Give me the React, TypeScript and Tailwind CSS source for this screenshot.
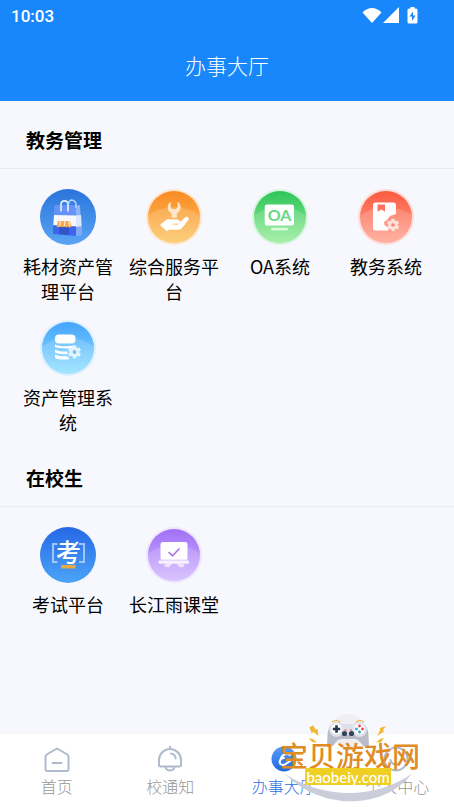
import React from "react";

const FONT = "font-['Noto_Sans_CJK_SC','Noto_Sans',sans-serif]";

type DiscProps = { id: string; top: string; bottom: string; rim: string; arc?: boolean; children: React.ReactNode };

function Disc({ id, top, bottom, rim, arc, children }: DiscProps) {
  return (
    <svg viewBox="0 0 56 56" className="size-14" aria-hidden="true">
      <defs>
        <linearGradient id={id} x1="0" y1="0" x2="0" y2="1">
          <stop offset="0" stopColor={top} />
          <stop offset="1" stopColor={bottom} />
        </linearGradient>
        <clipPath id={id + "-clip"}>
          <circle cx="28" cy="28" r="26" />
        </clipPath>
      </defs>
      <circle cx="28" cy="28" r="28" fill={arc ? rim : `url(#${id})`} />
      {arc && (
        <>
          <circle cx="28" cy="28" r="26" fill={`url(#${id})`} />
          <ellipse cx="28" cy="50" rx="38" ry="32" fill="#fff" opacity="0.16" clipPath={`url(#${id}-clip)`} />
        </>
      )}
      {children}
    </svg>
  );
}

function Gear({ x, y, s, fill, hole }: { x: number; y: number; s: number; fill: string; hole: string }) {
  return (
    <g transform={`translate(${x} ${y}) scale(${s})`}>
      {[0, 60, 120].map((a) => (
        <rect key={a} x="-1.8" y="-6.6" width="3.6" height="13.2" rx="1" fill={fill} transform={`rotate(${a})`} />
      ))}
      <circle r="5" fill={fill} />
      <circle r="1.9" fill={hole} />
    </g>
  );
}

const BagIcon = () => (
  <Disc id="bag" top="#2a74dc" bottom="#5aa5f5" rim="">
    <path d="M35 17l5-1 1.500 30-6.500 1z" fill="#8db4f8" />
    <path d="M14.500 16h21.500v30.500l-23-1.500z" fill="#6593fb" />
    <path d="M14 26l22 .5v11L13.300 36z" fill="#f6f8fe" />
    <path d="M36 26.500l5-.5.700 11.500-5.700.5z" fill="#dbe7fd" />
    <path d="M13.200 36.500l22.800 1v9.500l-23-2z" fill="#3b66ee" />
    <path d="M36 38l6-.5v8.500l-6 1z" fill="#82a9f7" />
    <path d="M19 38h10v8l-10-1z" fill="#3154c9" />
    <path d="M21 22.500v-6.500c0-5.500 7-5.500 7 0v6.500" fill="none" stroke="#e3eeff" strokeWidth="1.700" />
    <path d="M28.500 15c0-5.500 7.500-5 7.500 1v3" fill="none" stroke="#b4d2fb" strokeWidth="1.600" />
    <path d="M18 32h12l1.500 5.500c-1 1.500-3 1-3.700 0-1 1.300-2.700 1-3.500 0-1 1-2.600 1-3.300 0-1.300 1-3.300 1-4.500 0z" fill="#f6a651" />
    <path d="M20.500 32l-1 5M25 32l-.500 5M29 32l.500 5" stroke="#ffe6bd" strokeWidth="1.300" />
  </Disc>
);

const ServiceIcon = () => (
  <Disc id="service" top="#fb8a24" bottom="#fcc660" rim="#fde6cb" arc>
    <path
      d="M24.700 12.700c-4.200 2.300-4 9.200.9 11.500v4.500h5.200v-4.500c4.800-2.300 5-9.200.8-11.500v5.800l-1.800 1.600h-3.300l-1.800-1.600z"
      fill="#ffe6c9"
    />
    <path
      d="M14.500 36l5.500-4.600c1.500-1 3-1 5-.4h6.500c2.400.2 2.400 3 .2 3.300h1.500l6-5.500c1.800-1.500 4 .2 2.800 2l-6 7.800c-1 1.200-2 1.600-4 1.600h-9l-2.200 1.600z"
      fill="#fff"
      stroke="#fff"
      strokeWidth="1"
      strokeLinejoin="round"
    />
    <path d="M27 35.200h5" stroke="#fbb45a" strokeWidth=".8" strokeLinecap="round" />
  </Disc>
);

const OaIcon = () => (
  <Disc id="oa" top="#2ec65c" bottom="#97ec98" rim="#d6f5dc" arc>
    <rect x="12.700" y="15.500" width="29.300" height="21" rx="2.500" fill="#fff" />
    <text x="27.500" y="32" textAnchor="middle" fill="#67d783" className="font-[Lato,sans-serif] text-[16px] font-bold">
      OA
    </text>
    <rect x="19" y="38.800" width="17" height="2.600" rx="1.300" fill="#d9f9db" />
  </Disc>
);

const BookIcon = () => (
  <Disc id="book" top="#fb5b40" bottom="#ffa392" rim="#ffdcd6" arc>
    <path
      d="M17.500 13.500h18a2.500 2.500 0 0 1 2.500 2.500v9l-6 2-3 4-3 2 .5 3 3 2.500 1 3H17.500a2.500 2.500 0 0 1-2.500-2.500V16a2.500 2.500 0 0 1 2.500-2.500z"
      fill="#fff"
    />
    <path d="M19.500 15.500h7.500v7.200l-3.700-2.200-3.800 2.200z" fill="#fb7462" />
    <Gear x={35} y={36} s={0.95} fill="#ffe1dc" hole="#fb8271" />
  </Disc>
);

const DatabaseIcon = () => (
  <Disc id="database" top="#45a4fc" bottom="#93e1ff" rim="#dcf0ff" arc>
    <rect x="15" y="14.500" width="20.500" height="9" rx="4" fill="#fff" />
    <path
      d="M15 24.500c4 2 9 2.300 20.500 1v2c-6 1.500-16 1.200-20.500-.5zM15 29.500c4 2 8 2.300 12.500 2v2.500c-5 .5-9 0-12.500-1.500zM15 34.500c4 1.800 8 2 12.500 1.800l2 3c-6 .6-14.500.2-14.500-2z"
      fill="#fff"
    />
    <Gear x={34.500} y={32} s={1} fill="#e2f5ff" hole="#6fc1fd" />
  </Disc>
);

const ExamIcon = () => (
  <Disc id="exam" top="#2668e6" bottom="#4ba5f7" rim="">
    <path d="M17.500 17h-4.500v18h4.500M39 17h5v18h-5" fill="none" stroke="#9dc6fb" strokeWidth="2" />
    <text
      x="28.500"
      y="34.500"
      textAnchor="middle"
      fill="#fff"
      className="font-['Noto_Sans_CJK_SC',sans-serif] text-[25px] font-medium"
    >
      考
    </text>
    <rect x="21" y="38" width="14.500" height="3.500" fill="#e4aa45" />
  </Disc>
);

const ClassIcon = () => (
  <Disc id="class" top="#a070f6" bottom="#d2b8ff" rim="#eee5fe" arc>
    <rect x="14.500" y="15" width="27" height="18.500" rx="2.500" fill="#fff" />
    <path d="M22.500 25l4 3.800 7-7.300" fill="none" stroke="#a777e4" strokeWidth="1.700" />
    <path d="M13 33.200h30" stroke="#cfadfa" strokeWidth=".8" />
    <rect x="12.500" y="33.500" width="30.500" height="3.300" rx="1.200" fill="#f8efff" />
    <path d="M19.500 36.500h7l-4 4-4.500-1.200zM30 36.500h7l1.500 2.800-4.500 1.200z" fill="#f1e4ff" />
  </Disc>
);

const sections = [
  {
    title: "教务管理",
    apps: [
      { name: "耗材资产管理平台", Icon: BagIcon },
      { name: "综合服务平台", Icon: ServiceIcon },
      { name: "OA系统", Icon: OaIcon },
      { name: "教务系统", Icon: BookIcon },
      { name: "资产管理系统", Icon: DatabaseIcon },
    ],
  },
  {
    title: "在校生",
    apps: [
      { name: "考试平台", Icon: ExamIcon },
      { name: "长江雨课堂", Icon: ClassIcon },
    ],
  },
];

const navStroke = { fill: "none", stroke: "#b0bacd", strokeWidth: 2, strokeLinecap: "round", strokeLinejoin: "round" } as const;

const HomeIcon = () => (
  <svg viewBox="0 0 28 28" className="size-7" aria-hidden="true" {...navStroke}>
    <path d="M2.500 10.500c0-1 .4-1.500 1.200-2L14 2.500l10.300 6c.8.500 1.200 1 1.200 2v13a1.500 1.500 0 0 1-1.500 1.500h-20a1.500 1.500 0 0 1-1.500-1.500zM9.500 17h9" />
  </svg>
);
const BellIcon = () => (
  <svg viewBox="0 0 28 28" className="size-7" aria-hidden="true" {...navStroke}>
    <path d="M14 .7v2M4.500 20.500a1.500 1.500 0 0 1-1.500-1.500V14a11 11 0 0 1 22 0v5a1.500 1.500 0 0 1-1.500 1.500zM9.500 21c.5 4.500 8.500 4.500 9 0M15 7.500c3 .5 4.500 2.500 4.700 5" />
  </svg>
);
const HallIcon = () => (
  <svg viewBox="0 0 28 28" className="size-7" aria-hidden="true">
    <defs>
      <linearGradient id="hall" x1="0" y1="0" x2="0" y2="1">
        <stop offset="0" stopColor="#5b9cf8" />
        <stop offset="1" stopColor="#1f69e8" />
      </linearGradient>
    </defs>
    <circle cx="14" cy="13" r="12.500" fill="url(#hall)" />
    <path d="M11 12c2-4 6-5 9-3M14 12c-5 0-6 7-1 7 4 0 5-4 9-5" fill="none" stroke="#fff" strokeWidth="2" strokeLinecap="round" />
  </svg>
);
const UserIcon = () => (
  <svg viewBox="0 0 28 28" className="size-7" aria-hidden="true" {...navStroke}>
    <circle cx="13" cy="13" r="11.500" />
    <path d="M7.500 14c1.500 6 9.500 6 11 0" />
  </svg>
);

const tabs = [
  { name: "首页", Icon: HomeIcon },
  { name: "校通知", Icon: BellIcon },
  { name: "办事大厅", Icon: HallIcon, active: true },
  { name: "个人中心", Icon: UserIcon },
];

function Watermark() {
  return (
    <div className="pointer-events-none absolute right-[34px] bottom-0 h-[95px] w-[140px]">
      <svg viewBox="0 0 140 95" className="absolute inset-0 size-full" aria-hidden="true">
        <circle cx="68" cy="19" r="17" fill="#efeff1" />
        <path d="M5 62c38 25 90 26 127-.5C104 98 42 99 5 62z" fill="#cbcddb" />
        <path
          d="M51 13q5-5 11-1h12q6-4 11 1 3 3 3.500 10l.500 12q-6 1-9-5-2-3-5-3H61q-3 0-5 3-3 6-9 5l.500-12q.5-7 3.500-10z"
          fill="#b9bbc9"
        />
        <circle cx="56.500" cy="17.500" r="7.500" fill="#dfe0e9" />
        <circle cx="79.500" cy="17.500" r="7.500" fill="#dfe0e9" />
        <path d="M60 12h16v9q-8 4-16 0z" fill="#dfe0e9" />
        <path d="M52 10q4-3 8 0M76 10q4-3 8 0" fill="none" stroke="#e5ac3d" strokeWidth="1.200" />
        <circle cx="64.500" cy="21.500" r="2.600" fill="#33445a" />
        <circle cx="71.500" cy="21.500" r="2.600" fill="#33445a" />
        <path d="M64.500 18h2M70 18h2" stroke="#e7444e" strokeWidth="1" />
        <circle cx="56.500" cy="17" r="5.400" fill="#fff" />
        <path d="M52.800 17h7.400M56.500 13.300v7.400" stroke="#23374d" strokeWidth="2.600" />
        <circle cx="79.500" cy="17" r="5.400" fill="#fff" />
        <circle cx="79.500" cy="14" r="1.400" fill="#e7444e" />
        <circle cx="79.500" cy="20" r="1.400" fill="#2da7ad" />
        <circle cx="76.500" cy="17" r="1.400" fill="#35a8e0" />
        <circle cx="82.500" cy="17" r="1.400" fill="#e7444e" />
        <path
          d="M29.500 15l4-1.500 2 4 2-.5 1 7-5-4-2 1zM106 14l-6 2 0 2.500-3 5.500 7-4.500-1-1.500zM29 26l4 1 1 1 3 2.500-5-.5zM104 26l-4 1-1 1-3 2.500 5-.5z"
          fill="#f3b632"
        />
      </svg>
      <span className="absolute top-[28px] left-0 text-[28px] leading-[30px] font-medium whitespace-nowrap text-[#e08b24]">
        宝贝游戏网
      </span>
      <span className="absolute top-14 left-[25px] flex h-[17px] w-[86px] items-center justify-center bg-[#efcf24] font-[Lato,sans-serif] text-[15px] leading-4 font-medium text-white">
        baobeiy.com
      </span>
    </div>
  );
}

export default function App() {
  return (
    <div className={`relative flex min-h-screen flex-col bg-[#f6f8fd] text-black ${FONT}`}>
      <header className="bg-[#1787fb] text-white">
        <div className="flex h-8 items-center justify-between pr-[35px] pl-[11px]">
          <time className="font-[Roboto,sans-serif] text-[17px] leading-6 font-medium">10:03</time>
          <svg viewBox="0 0 58 18" className="h-[18px] w-[58px]" fill="#fff" aria-hidden="true">
            <path d="M1.500 5.500C7-.5 15-.5 20.500 5.500L11 16z" />
            <path d="M22 16L38 0v16z" />
            <path
              fillRule="evenodd"
              d="M49.500 1.500V0h4v1.500H55q1.500 0 1.500 1.500v12q0 1.500-1.500 1.500h-7q-1.500 0-1.500-1.500v-12Q46.500 1.500 48 1.500zM52 4.500l-3.500 5H51V14l3.500-5.500H52z"
            />
          </svg>
        </div>
        <div className="flex h-[69px] items-center justify-center pb-1">
          <h1 className="text-[21px] leading-7 font-light">办事大厅</h1>
        </div>
      </header>

      <main className="flex-1 pt-3">
        {sections.map((s) => (
          <section key={s.title}>
            <h2 className="flex h-14 items-center border-b border-[#e9ebee] px-[26px] text-[19px] font-bold">{s.title}</h2>
            <ul className="grid grid-cols-4 px-[15px] pt-5">
              {s.apps.map(({ name, Icon }) => (
                <li key={name} className="pb-4">
                  <button type="button" className="flex w-full flex-col items-center gap-[9px] px-1 text-[18px] leading-[25px]">
                    <Icon />
                    <span>{name}</span>
                  </button>
                </li>
              ))}
            </ul>
          </section>
        ))}
      </main>

      <nav className="grid h-[73px] grid-cols-4 bg-white shadow-[0_-1px_3px_rgba(0,0,0,0.02)]">
        {tabs.map(({ name, Icon, active }) => (
          <button
            key={name}
            type="button"
            className={`flex flex-col items-center pt-3 text-[16px] leading-6 font-light ${active ? "text-[#2a72e0]" : "text-[#999999]"}`}
          >
            <Icon />
            <span>{name}</span>
          </button>
        ))}
      </nav>
      <Watermark />
    </div>
  );
}
